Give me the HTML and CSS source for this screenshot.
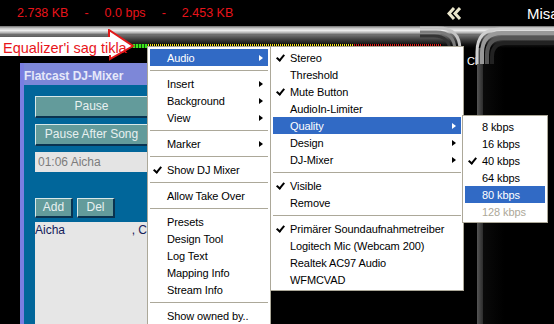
FILE: index.html
```html
<!DOCTYPE html>
<html lang="de">
<head>
  <meta charset="UTF-8" />
  <title>Flatcast</title>
  <link rel="stylesheet" href="styles.css">
</head>
<body>
  <div class="screen">
    <header class="topbar">
      <div class="stats">
        <span>2.738 KB</span><span>-</span><span>0.0 bps</span><span>-</span><span>2.453 KB</span>
      </div>
      <svg class="collapse" width="14" height="13" viewBox="0 0 14 13">
        <polyline points="7,1 2,6.5 7,12" fill="none" stroke="#ebe7cc" stroke-width="3"/>
        <polyline points="13,1 8,6.5 13,12" fill="none" stroke="#ebe7cc" stroke-width="3"/>
      </svg>
      <div class="user">Misa</div>
    </header>

    <div class="rail"></div>
    <div class="eq-row">
      <div class="eq"></div>
    </div>

    <div class="workspace">
      <div class="gutter"></div>
      <section class="mixer">
        <div class="mixer-title">Flatcast DJ-Mixer</div>
        <div class="mixer-body">
          <div class="btn wide">Pause</div>
          <div class="btn wide">Pause After Song</div>
          <div class="now-playing">01:06 Aicha</div>
          <div class="btn-row">
            <div class="btn small">Add</div>
            <div class="btn small">Del</div>
          </div>
          <div class="playlist">
            <div class="track"><span>Aicha</span><span>, C</span></div>
          </div>
        </div>
      </section>
      <div class="stage"></div>
      <div class="side-panel">Cl</div>
      <div class="vbar"></div>
      <div class="right-dark"></div>
    </div>

    <!-- pipe junction of the skin -->
    <svg class="pipes" width="134" height="40" viewBox="0 0 134 40">
      <path d="M0 4 H18 Q40 4 40 26 V40" fill="none" stroke="#c4c4c4" stroke-width="3"/>
      <path d="M0 8 H16 Q35 8 35 27 V40" fill="none" stroke="#7c7c7c" stroke-width="3"/>
      <path d="M0 12 H14 Q30 12 30 28 V40" fill="none" stroke="#343434" stroke-width="3"/>
      <path d="M134 5 H80 Q57 5 57 28 V40" fill="none" stroke="#cfcfcf" stroke-width="3"/>
      <path d="M134 9 H82 Q62 9 62 29 V40" fill="none" stroke="#999" stroke-width="4"/>
      <path d="M134 14 H84 Q67 14 67 31 V40" fill="none" stroke="#555" stroke-width="4"/>
      <path d="M134 19 H86 Q72 19 72 33 V40" fill="none" stroke="#222" stroke-width="4"/>
    </svg>

    <!-- annotation -->
    <svg class="callout" width="136" height="32" viewBox="0 0 136 32">
      <rect x="0" y="8" width="112" height="19" fill="#fff"/>
      <path d="M109 8 V1 L133 17 L110 30 V26" fill="#fff" stroke="#e21a1a" stroke-width="2"/>
      <text x="3" y="24" class="callout-text">Equalizer'i sag tikla</text>
    </svg>

    <div class="menu main-menu">
      <div class="item active"><span class="mark"></span><span class="label">Audio</span><span class="arrow"></span></div>
      <div class="sep"></div>
      <div class="item"><span class="mark"></span><span class="label">Insert</span><span class="arrow"></span></div>
      <div class="item"><span class="mark"></span><span class="label">Background</span><span class="arrow"></span></div>
      <div class="item"><span class="mark"></span><span class="label">View</span><span class="arrow"></span></div>
      <div class="sep"></div>
      <div class="item"><span class="mark"></span><span class="label">Marker</span><span class="arrow"></span></div>
      <div class="sep"></div>
      <div class="item"><span class="mark on"></span><span class="label">Show DJ Mixer</span></div>
      <div class="sep"></div>
      <div class="item"><span class="mark"></span><span class="label">Allow Take Over</span></div>
      <div class="sep"></div>
      <div class="item"><span class="mark"></span><span class="label">Presets</span></div>
      <div class="item"><span class="mark"></span><span class="label">Design Tool</span></div>
      <div class="item"><span class="mark"></span><span class="label">Log Text</span></div>
      <div class="item"><span class="mark"></span><span class="label">Mapping Info</span></div>
      <div class="item"><span class="mark"></span><span class="label">Stream Info</span></div>
      <div class="sep"></div>
      <div class="item"><span class="mark"></span><span class="label">Show owned by..</span></div>
    </div>

    <div class="menu audio-menu">
      <div class="item"><span class="mark on"></span><span class="label">Stereo</span></div>
      <div class="item"><span class="mark"></span><span class="label">Threshold</span></div>
      <div class="item"><span class="mark on"></span><span class="label">Mute Button</span></div>
      <div class="item"><span class="mark"></span><span class="label">AudioIn-Limiter</span></div>
      <div class="item active"><span class="mark"></span><span class="label">Quality</span><span class="arrow"></span></div>
      <div class="item"><span class="mark"></span><span class="label">Design</span><span class="arrow"></span></div>
      <div class="item"><span class="mark"></span><span class="label">DJ-Mixer</span><span class="arrow"></span></div>
      <div class="sep"></div>
      <div class="item"><span class="mark on"></span><span class="label">Visible</span></div>
      <div class="item"><span class="mark"></span><span class="label">Remove</span></div>
      <div class="sep"></div>
      <div class="item"><span class="mark on"></span><span class="label">Primärer Soundaufnahmetreiber</span></div>
      <div class="item"><span class="mark"></span><span class="label">Logitech Mic (Webcam 200)</span></div>
      <div class="item"><span class="mark"></span><span class="label">Realtek AC97 Audio</span></div>
      <div class="item"><span class="mark"></span><span class="label">WFMCVAD</span></div>
    </div>

    <div class="menu quality-menu">
      <div class="item"><span class="mark"></span><span class="label">8 kbps</span></div>
      <div class="item"><span class="mark"></span><span class="label">16 kbps</span></div>
      <div class="item"><span class="mark on"></span><span class="label">40 kbps</span></div>
      <div class="item"><span class="mark"></span><span class="label">64 kbps</span></div>
      <div class="item active"><span class="mark"></span><span class="label">80 kbps</span></div>
      <div class="item disabled"><span class="mark"></span><span class="label">128 kbps</span></div>
    </div>
  </div>
</body>
</html>
```

FILE: styles.css
```css
* {
  box-sizing: border-box;
}

body {
  margin: 0;
  background: #000;
  font-family: "Liberation Sans", Arial, sans-serif;
}

.screen {
  position: relative;
  width: 554px;
  height: 324px;
  overflow: hidden;
  background: #000;
}

/* top status bar */
.topbar {
  height: 26px;
  display: flex;
  align-items: center;
  padding-left: 17px;
}

.stats {
  display: flex;
  gap: 16px;
  color: #e8141b;
  font-size: 12.5px;
}

.collapse {
  margin-left: auto;
  flex: none;
}

.user {
  flex: none;
  width: 27px;
  margin-left: 66px;
  color: #fff;
  font-size: 15px;
  white-space: nowrap;
}

.rail {
  height: 9px;
  background: linear-gradient(#6e6e6e, #c8c8c8 25%, #ececec 50%, #b4b4b4 75%, #5a5a5a);
}

.eq-row {
  height: 13px;
  padding: 9px 0 0 130px;
  background: linear-gradient(#707070, #3a3a3a 40%, #111 75%, #000);
}

.eq {
  width: 315px;
  height: 4px;
  background:
    repeating-linear-gradient(90deg, #f4e21c 0 1px, #000 1px 2px) 18px 0 / 206px 3px no-repeat,
    repeating-linear-gradient(90deg, #e0201c 0 1px, #000 1px 2px) 224px 0 / 88px 3px no-repeat,
    repeating-linear-gradient(90deg, #3fe21c 0 2px, #0b5a0b 2px 3px) 0 0 / 18px 4px no-repeat,
    linear-gradient(transparent 3px, #1aa6a0 3px);
}

/* main area below the skin */
.workspace {
  height: 276px;
  display: flex;
}

.gutter {
  width: 20px;
}

.mixer {
  width: 135px;
  margin-top: 15px;
  display: flex;
  flex-direction: column;
  border-left: 4px solid #7a7ee2;
}

.mixer-title {
  height: 22px;
  padding: 6px 0 0 0;
  background: #7d87d8;
  color: #e6e8fa;
  font-size: 12px;
  font-weight: bold;
}

.mixer-body {
  flex: 1;
  background: #01669a;
  padding: 11px 0 0 11px;
  display: flex;
  flex-direction: column;
}

.btn {
  background: #639b9b;
  color: #e8f0f0;
  font-size: 12px;
  text-align: center;
  border-top: 1px solid #d8e8e8;
  border-left: 1px solid #d8e8e8;
  border-right: 2px solid #0a3350;
  border-bottom: 2px solid #0a3350;
}

.btn.wide {
  width: 114px;
  height: 22px;
  line-height: 19px;
  margin-bottom: 6px;
}

.now-playing {
  width: 114px;
  height: 20px;
  background: #e4e4e4;
  color: #7c7c7c;
  font-size: 12px;
  padding: 3px 0 0 3px;
}

.btn-row {
  display: flex;
  gap: 4px;
  margin-top: 26px;
}

.btn.small {
  width: 38px;
  height: 20px;
  line-height: 17px;
}

.playlist {
  flex: 1;
  width: 113px;
  margin-top: 4px;
  background: #e6e6e6;
  border-right: 1px solid #fff;
}

.track {
  display: flex;
  justify-content: space-between;
  color: #14205a;
  font-size: 12px;
  padding-top: 1px;
}

.stage {
  flex: 1;
}

.side-panel {
  width: 22px;
  padding: 7px 0 0 12px;
  color: #fff;
  font-size: 11px;
}

.vbar {
  width: 6px;
  background: linear-gradient(90deg, #555, #2c2c2c);
}

.right-dark {
  width: 71px;
  background: linear-gradient(90deg, #0a0a0a, #000 30%);
}

/* overlays */
.pipes {
  position: absolute;
  left: 420px;
  top: 24px;
}

.callout {
  position: absolute;
  left: 0;
  top: 29px;
}

.callout-text {
  font-family: "Liberation Sans", Arial, sans-serif;
  font-size: 14.5px;
  fill: #e8141b;
}

/* context menus */
.menu {
  position: absolute;
  background: #fff;
  border: 1px solid #aca899;
  padding: 2px;
  font-size: 11px;
  letter-spacing: -0.1px;
  color: #000;
}

.main-menu {
  left: 147px;
  top: 46px;
  width: 124px;
}

.audio-menu {
  left: 270px;
  top: 46px;
  width: 194px;
}

.quality-menu {
  left: 462px;
  top: 115px;
  width: 86px;
}

.item {
  height: 17px;
  display: flex;
  align-items: center;
}

.item.active {
  background: #316ac5;
  color: #fff;
}

.item.disabled {
  color: #aca899;
}

.mark {
  width: 17px;
  height: 17px;
  flex: none;
  position: relative;
}

.mark.on::after {
  content: "";
  position: absolute;
  left: 5px;
  top: 4px;
  width: 3px;
  height: 6px;
  border-right: 2px solid #000;
  border-bottom: 2px solid #000;
  transform: rotate(40deg);
}

.label {
  flex: 1;
  white-space: nowrap;
}

.arrow {
  width: 0;
  height: 0;
  margin-right: 5px;
  border-top: 3.5px solid transparent;
  border-bottom: 3.5px solid transparent;
  border-left: 4px solid #000;
}

.item.active .arrow {
  border-left-color: #fff;
}

.sep {
  height: 9px;
  padding-top: 4px;
}

.sep::before {
  content: "";
  display: block;
  height: 1px;
  background: #aca899;
}
```
